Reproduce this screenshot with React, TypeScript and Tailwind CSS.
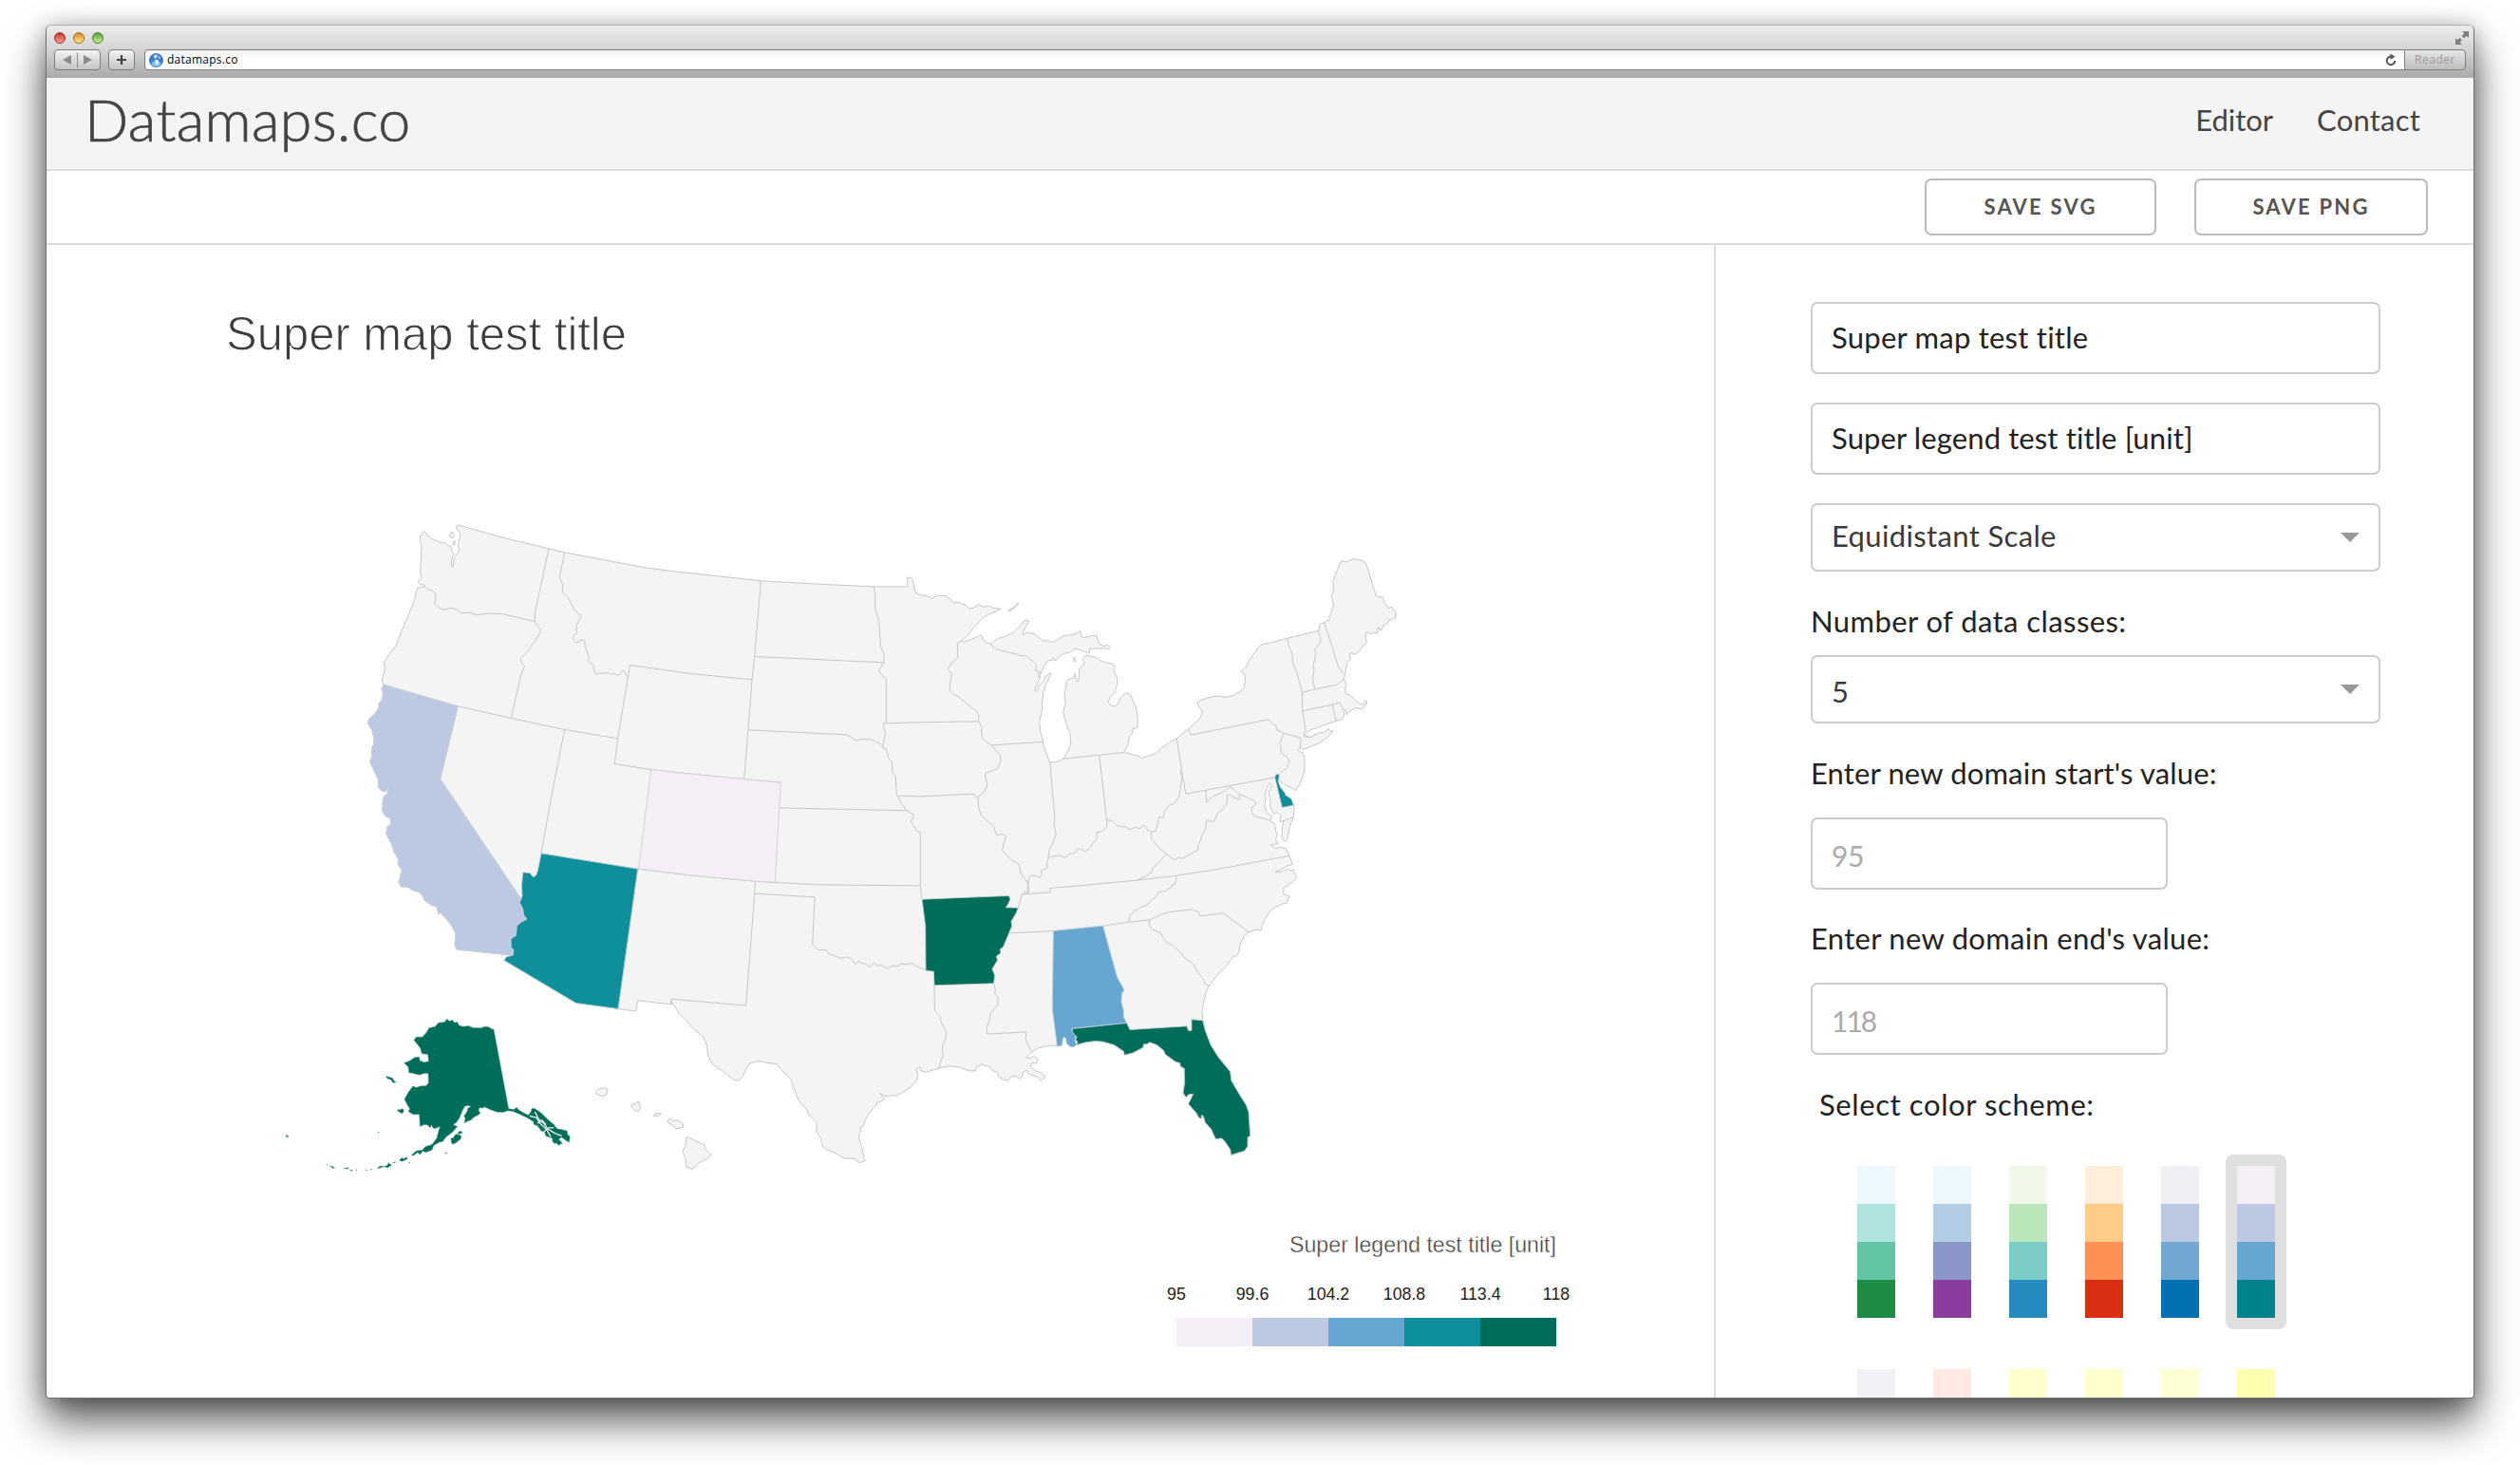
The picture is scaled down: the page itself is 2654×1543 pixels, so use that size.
import React from "react";

/* Map geometry is kept as point lists per survey sheet; each sheet has its own origin. */
const sheet = (dx: number, dy: number) => (points: string) =>
  points
    .trim()
    .split(/\s+/)
    .map((p) => {
      const [x, y] = p.split(",").map(Number);
      return `${x + dx},${y + dy}`;
    })
    .join(" ");

const northwest = sheet(0, 0);
const southwest = sheet(0, 810);
const midwest = sheet(1260, 150);
const gulf = sheet(1260, 1170);
const northeast = sheet(2100, 210);
const southeast = sheet(2100, 1110);
const pacific = sheet(-240, 1560);

const caCoastSouth =
  "540,617 363,599 357,585 360,548 345,520 325,497 312,482 305,488 300,463 285,460 260,442 256,430 245,418 225,412 210,402 187,400 180,385 190,348 177,330 180,315 165,290 158,268 140,232 145,208 149,210 156,198 152,183 138,178 128,160 130,125 134,112 143,110 147,88 138,100 125,97 115,85 115,62 105,40 90,8";
const caCoastNorth =
  "90,810 95,802 95,772 101,760 101,738 95,715 83,695 85,682 108,660 116,645 118,630 127,620 130,600 126,585 132,572";
const coloradoRiver =
  "540,617 543,600 535,592 534,565 550,555 553,525 565,513 585,503 575,490 572,470 562,450";

const floridaCoast =
  "585,520 620,523 628,555 645,600 670,640 707,685 710,712 735,755 757,790 765,812 770,888 762,892 762,920 752,935 735,940 710,948 707,930 690,905 680,895 662,898 655,885 648,868 628,845 622,825 616,822 616,833 608,830 600,815 575,787 582,772 590,755 575,757 568,766 558,752 563,720 562,675 550,668 548,657 535,654 502,630 497,618 475,600 452,592 443,598 433,598 432,608 400,625 373,632 370,620 340,600 305,590 280,588 250,592 222,600";
const mobileBay =
  "222,600 210,607 200,605 190,595 188,580 182,575 177,585 175,602 160,604";

const mainland = [
  northwest(
    "260,87 269,97 280,109 297,116 313,123 326,124 333,131 345,135 348,150 353,155 351,165 347,180 347,198 352,198 355,172 368,153 370,145 367,127 374,105 373,92 361,78 363,70 370,68 390,74 520,110 654,142 704,154 830,178 965,203 1060,215 1190,229 1324,244"
  ),
  midwest(
    "245,104 420,112 527,112 527,84 536,83 545,92 548,115 553,132 570,138 590,142 603,150 622,140 645,141 660,150 675,165 685,160 700,168 708,168 722,181 735,180 755,167 760,176 785,174 800,180 822,182 800,193 770,207 745,232 715,268 697,284 705,288 730,278 760,266 765,270 763,278 780,290 790,293 800,285 815,275 835,270 865,255 890,228 897,218 911,221 900,240 892,256 892,266 905,256 930,262 955,284 967,282 985,288 1000,280 1020,268 1055,262"
  ),
  northeast(
    "232,193 238,212 250,212 270,208 285,206 289,222 295,235 310,240 318,235 326,242 322,250 308,247 285,248 263,248 262,262 248,258 235,252 215,248 205,258 175,266 160,282 153,286 148,276 145,285 131,286 118,306 107,330 104,345 88,380 95,383 103,365 118,350 122,336 140,325 138,333 125,360 116,388 113,420 112,445 104,480 107,510 115,535 117,555 128,585 137,607 150,607 165,604 180,596 193,575 203,550 202,520 190,490 179,450 187,420 183,390 187,375 189,358 193,347 212,340 217,327 220,350 227,352 230,325 229,312 243,300 247,290 240,282 252,268 270,273 285,276 295,285 315,292 335,296 342,308 338,318 350,340 350,360 345,378 342,388 328,400 322,418 330,428 345,430 357,415 362,400 380,388 393,395 400,415 410,435 415,470 414,495 405,502 400,498 397,515 387,530 385,550 372,572 376,576 400,584 415,587 428,594 445,588 472,580 490,562 515,545 538,532 575,502 610,470 620,448 610,435 602,417 630,405 660,398 680,398 690,402 720,395 750,375 755,345 752,328 740,320 755,308 770,280 800,240 812,233 830,231 885,216 986,191 990,172 1004,165 1022,155 1019,147 1025,138 1033,110 1027,80 1033,65 1032,35 1045,0 1058,-30 1072,-26 1098,-36 1125,-30 1135,-22 1143,0 1168,82 1190,86 1192,100 1205,118 1207,123 1215,115 1232,137 1228,152 1222,150 1215,158 1207,157 1203,170 1192,172 1187,182 1182,192 1175,180 1172,200 1160,197 1150,202 1138,195 1134,205 1138,230 1125,240 1118,252 1105,264 1095,266 1092,261 1084,265 1087,280 1075,295 1070,328 1066,345 1074,360 1070,378 1073,392 1085,393 1100,408 1112,420 1130,425 1133,412 1139,415 1138,423 1122,440 1105,435 1090,442 1078,450 1075,457 1071,442 1063,440 1068,458 1060,470 1042,477 1010,487 985,497 960,505 943,522 960,528 985,515 1005,512 1018,500 1020,508 1033,508 1015,528 985,548 955,560 935,567 930,560 920,568 924,573 937,578 942,600 942,630 935,655 925,680 918,688 915,697 905,690 885,680 865,668 860,660 858,670 865,688 880,705 895,722 905,738 909,745 907,780 895,810 887,850 878,858 870,845 872,815 875,792 866,796 864,785 868,778 855,765 845,770 838,760 832,740 834,725 828,700 835,690 838,680 832,672 822,690 817,710 820,720 815,745 822,765 835,775 838,785 832,792 848,802 850,825 857,835 850,850 858,865 835,868 850,880 865,875 870,877 882,878 893,903 905,930 890,933 868,945 850,955 870,952 890,945 900,950 905,946 912,960 916,970 905,985 895,992 875,1005 875,1022 893,1030 886,1052 870,1055 850,1065 832,1078"
  ),
  southeast(
    "818,200 807,225 805,237 790,236 765,244 750,258 737,285 735,305 728,318 715,322 695,350 680,365 665,380 655,395 640,413 630,435 622,470 618,492 620,523"
  ),
  southeast(floridaCoast),
  southeast(mobileBay),
  southeast("155,602 130,603 100,610 82,622"),
  gulf(
    "915,568 902,580 915,583 925,575 940,585 935,598 918,598 917,610 930,622 950,628 963,640 950,654 935,640 910,632 905,620 893,625 890,640 882,648 870,638 855,640 845,653 830,650 815,640 812,628 795,620 785,608 768,605 764,600 745,610 742,622 720,622 690,610 660,607 628,613 585,627 568,620 568,610 553,618 560,632 558,650 535,675 500,697 487,702 478,699 465,703 452,700 440,693 455,712 440,720 432,718 430,728 410,750 395,775 385,800 376,800 380,810 373,832 383,862 390,900 395,906 375,912 360,900 325,898 300,882 265,868 257,855 253,835 240,815 240,785 215,760 208,743 185,718 165,670 160,650 140,630 125,615 115,600 85,597 55,590 45,595 30,597 15,620 8,638"
  ),
  pacific(
    "1500,258 1490,263 1478,260 1445,235 1410,210 1397,185 1393,150 1380,122 1355,103 1330,75 1305,50 1290,25 1280,12"
  ),
  southwest("1042,772 935,760 929,794 873,786 740,768 513,633 520,622"),
  southwest(caCoastSouth),
  northwest(caCoastNorth),
  northwest(
    "127,560 136,520 133,502 150,475 170,450 190,400 205,365 230,305 235,278 240,266 262,262 260,257 248,255 240,247 252,236 248,215 252,130 247,118 248,100 260,87"
  ),
].join(" ");

const borders = [
  northwest("262,262 270,270 285,274 295,283 297,297 293,318 318,335 345,330 362,333 378,346 405,344 428,352 460,347 505,348 609,372"),
  northwest("654,142 609,350 611,375 628,398 628,405 610,435 597,450 595,458 565,490 568,503 578,512 566,540 535,678"),
  northwest("132,572 367,640 535,678 704,714 872,742"),
  northwest("704,154 688,232 698,255 698,280 712,293 730,325 732,332 748,350 757,352 742,385 740,398 744,408 732,418 730,428 740,440 763,429 768,435 768,450 782,487 778,498 795,510 798,530 804,540 815,535 830,537 842,533 850,540 860,536 870,542 878,540 890,526 904,548"),
  northwest("904,548 911,510 1100,537 1296,556"),
  northwest("904,548 872,742 862,822 975,840 1120,856 1271,871 1387,881"),
  northwest("1324,244 1304,483 1296,556 1284,714 1271,871"),
  northwest("367,640 311,870") + " " + southwest("565,437 562,450"),
  northwest("704,714 667,900") + " " + southwest("630,295"),
  southwest("630,295 935,344 1100,364 1306,383 1380,388"),
  southwest("935,344 873,786"),
  southwest("1306,383 1304,424 1277,776 1040,755 1042,772"),
  gulf("44,62 234,73 227,223 245,240 272,240 278,252 300,260 320,267 335,262 350,268 362,285 372,276 385,282 400,288 408,295 422,281 432,290 445,288 463,299 480,290 495,291 510,284 525,286 540,281 558,293 584,303"),
  midwest("45,333 453,352"),
  midwest("24,565 335,580 370,600 380,594 412,595 430,603 445,612 450,622"),
  midwest("420,112 425,135 425,180 437,220 442,300 453,325 453,352 444,365 437,378 447,393 460,402 460,544"),
  midwest("452,544 560,541 752,538"),
  midwest("452,544 453,560 458,575 452,600 450,622 460,625 468,655 478,665 480,700 490,712 493,770 510,800 525,820 548,832 538,855 557,885 568,888 568,1057 572,1100"),
  midwest("122,811 260,814 525,820"),
  midwest("109,1047 245,1054 568,1057"),
  midwest("498,773 570,775 735,767 752,782"),
  midwest("697,284 685,290 686,338 665,353 660,365 655,372 667,388 661,420 661,440 675,453 690,460 715,483 745,505 752,520 752,538 763,558 760,565 763,590 780,605 792,613 820,645 822,660 812,688 773,702 773,715 780,735 770,760 755,770 750,785 752,810 760,835 800,870 808,898 825,893 838,900 827,945 855,975 880,990 885,1018 905,1045 909,1060 910,1080 898,1075 897,1083 888,1085 885,1100 877,1128"),
  midwest("792,613 870,608 955,603"),
  midwest("790,293 805,310 850,320 885,330 905,332 925,350 935,360 932,378 945,380 940,393 947,402"),
  midwest("977,665 993,850 990,865 997,895 985,925 975,945 972,968"),
  northeast("68,985 75,965 90,965 105,972 112,960 108,950 130,940 127,925 133,910 150,903 170,902 185,908 200,896 215,895 220,885 235,880 245,888 258,885 275,860 285,848 285,827 300,827 317,812 317,790 335,792 350,808 378,812 390,820 408,813 420,817 435,805 445,820 458,827 472,825 478,800 482,780 495,782 500,760 515,742 530,738 545,715 550,690 555,650 550,640 552,630"),
  northeast("293,584 317,790"),
  northeast("180,596 293,584 372,576"),
  northeast("538,532 566,707 848,655"),
  northeast("575,502 582,521 828,472 840,485 852,492 855,505 877,515 929,530 929,560"),
  northeast("877,515 862,548 867,555 867,575 885,590 895,605 885,625 862,645 855,645"),
  northeast("888,216 892,240 902,260 905,295 918,325 926,355 934,387 935,445 945,505 940,518 940,526 960,528"),
  northeast("986,191 988,205 993,215 990,232 975,250 977,265 970,300 972,315 968,340 970,360 975,376"),
  northeast("934,387 975,376 1045,362 1057,350 1066,345"),
  northeast("1004,165 1025,230 1048,305 1066,328"),
  northeast("935,445 1030,425 1052,418 1060,432 1063,440"),
  northeast("1030,425 1042,477"),
  northeast("629,697 633,735 655,712 670,708 690,698 707,685 720,695 735,708 755,715 785,730 788,740 775,750 775,768 785,778 815,785 832,792"),
  northeast("737,710 735,725 698,708 697,735 683,755 668,768 655,795 633,790 628,820 618,835 615,850 605,870 605,885 580,897 555,912 545,907 532,915 515,905 500,893 480,875 458,850 458,827"),
  northeast("505,897 480,925 462,942 460,952 440,968 412,980"),
  southeast("47,124 140,118 137,105 230,97 412,80 530,66 662,46 800,20 893,3"),
  southeast("70,82 68,120"),
  northeast("875,793 907,780"),
  southeast("10,247 148,240 305,224 387,212 453,205 490,188 515,180 590,172 597,178 605,178 612,193 685,184 765,244"),
  southeast("387,212 390,192 400,180 425,165 445,158 455,145 475,130 480,118 500,115 520,102 522,95 530,95 536,80 536,66"),
  southeast("453,205 450,220 460,235 485,245 505,275 527,288 555,312 560,322 590,345 605,372 625,395 627,408 640,413"),
  gulf("612,352 613,433 630,450 632,465 650,500 648,520 637,545 640,575 632,590 628,613"),
  gulf("800,346 805,365 803,378 813,390 812,415 790,440 785,465 777,485 780,506 903,499 900,520 915,555 922,562"),
];

const valued: { id: string; fill: string; points: string }[] = [
  { id: "CA", fill: "#bdc8e2", points: [northwest("132,572 367,640 311,870"), southwest("565,437 562,450 572,470 575,490 585,503 565,513 553,525 550,555 534,565 535,592 543,600"), southwest(caCoastSouth), northwest(caCoastNorth)].join(" ") },
  { id: "AZ", fill: "#0e8f9a", points: [southwest("562,450 570,430 568,400 572,355 595,357 600,365 607,370 615,362 620,345 630,295 935,344 873,786 740,768 513,633 520,622"), southwest(coloradoRiver)].join(" ") },
  { id: "CO", fill: "#f5eef6", points: [northwest("977,840 1120,856 1387,881 1369,1196"), southwest("1306,383 1100,364 937,344")].join(" ") },
  { id: "AR", fill: "#006d59", points: gulf("573,80 848,69 852,80 845,95 838,106 877,107 870,125 855,150 857,165 848,187 830,230 820,238 822,250 808,260 812,272 795,300 803,320 800,346 612,352 610,308 585,305 584,165") },
  { id: "AL", fill: "#65a7d1", points: southeast("148,240 305,224 350,387 368,418 372,430 365,435 363,465 370,490 370,512 380,531 207,549 209,560 220,570 216,585 " + mobileBay + " 145,487") },
  { id: "FL", fill: "#006d59", points: southeast("207,549 380,531 390,552 570,541 575,555 585,555 585,540 " + floridaCoast + " 225,590 218,585 222,575 209,560") },
  { id: "DE", fill: "#0e8f9a", points: northeast("848,655 852,645 860,645 862,652 858,665 865,685 880,705 882,712 900,722 907,743 871,750") },
];

const alaska = [
  "572,68 580,75 590,72 596,80 605,78 610,88 622,92 640,90 655,96 680,97 692,92 705,94 712,99 720,101 767,352 785,354 792,347 798,355 815,365 830,372 838,360 840,352 848,350 870,365 890,385 910,402 920,415 937,418 952,422 953,432 961,440 958,458 948,452 935,442 925,448 938,462 932,462 926,468 918,460 912,462 906,455 905,445 885,438 880,425 870,422 858,405 847,402 845,392 825,380 800,368 780,360 765,358 750,363 730,362 710,355 690,346 684,350 675,348 672,358 678,365 670,372 655,380 648,388 640,390 627,397 630,382 626,375 636,360 638,350 648,345 638,341 628,345 620,360 612,380 602,395 592,402 605,408 590,425 582,432 570,440 558,456 550,457 530,468 525,482 505,490 495,485 487,497 480,490 465,500 460,498 475,485 495,482 503,472 525,465 540,445 545,425 550,408 541,412 530,415 523,403 520,412 510,403 500,402 487,408 485,370 465,370 450,360 455,352 447,340 438,322 450,300 465,280 475,285 490,280 505,280 510,275 514,270 513,240 500,240 485,245 465,240 452,238 450,220 437,207 455,200 470,190 484,188 487,200 500,205 514,202 512,180 493,178 488,160 468,135 475,125 495,125 508,110 515,97 535,92 545,80 565,78",
  "380,248 390,252 400,255 405,264 412,268 402,270 395,260 383,256",
  "415,355 425,355 432,351 436,360 430,367 418,360",
  "585,445 592,444 600,432 612,434 618,440 615,448 600,460 590,464 586,458",
  "605,428 615,422 622,427 612,432",
  "422,515 428,507 435,510 445,505 447,511 430,518",
  "352,541 358,535 365,532 370,536",
  "370,534 383,532 388,523 397,530 385,538",
  "400,523 410,519 408,523",
  "63,434 68,437 72,441 66,442",
  "192,527 195,529 193,531",
  "202,532 210,534 218,539 212,540",
  "246,541 262,538 258,542",
  "266,545 275,547 268,548",
  "284,544 288,545 285,547",
  "316,544 320,545 317,547",
  "330,543 335,543 332,545",
  "355,425 358,426 355,428",
  "567,490 572,491 569,494",
  "452,520 456,522 454,524",
].map(pacific);

const straits = [
  "834,375 855,380 868,400 885,415 900,440",
  "850,362 862,385 880,400 890,415 915,430 935,438",
  "858,398 872,388 885,402",
  "875,428 892,412 910,412",
].map(pacific);

const hawaii = [
  "1042,300 1050,290 1068,286 1080,290 1077,305 1065,313 1045,306",
  "1153,342 1165,337 1177,328 1180,338 1185,345 1180,357 1168,360 1158,350",
  "1224,374 1232,366 1250,367 1240,375",
  "1270,388 1278,382 1285,390 1300,388 1318,398 1318,410 1295,416 1285,402 1272,398",
  "1328,443 1333,441 1360,455 1385,465 1390,482 1408,498 1390,512 1365,525 1348,543 1328,535 1326,510 1317,485 1328,465",
].map(pacific);

const islets = [
  midwest("845,188 860,178 878,163 872,174 850,190"),
  northwest("349,88 355,100 349,108 340,104 341,97"),
  northwest("354,117 359,122 356,132 349,126"),
  northeast("213,274 220,282 218,288 212,288"),
];

const legend = [
  { fill: "#f5eef6", from: "95" },
  { fill: "#bdc8e2", from: "99.6" },
  { fill: "#65a7d1", from: "104.2" },
  { fill: "#0e8f9a", from: "108.8" },
  { fill: "#006d59", from: "113.4" },
];

function MapChart() {
  return (
    <svg width="1756" height="1214" viewBox="0 0 1756 1214" className="block shrink-0" fontFamily='"Liberation Sans", Arial, sans-serif'>
      <text x="189" y="110.500" fontSize="50" fill="#3c3c3c" stroke="#fff" strokeWidth="1" textLength="422" lengthAdjust="spacingAndGlyphs">
        Super map test title
      </text>
      <g transform="translate(311 272.5) scale(0.33333)" fill="#f4f4f4" stroke="#c6c6c6" strokeWidth="3" strokeLinejoin="round">
        <polygon points={mainland} />
        {borders.map((b, i) => (
          <polyline key={i} points={b} fill="none" />
        ))}
        {valued.map((s) => (
          <polygon key={s.id} points={s.points} fill={s.fill} stroke={s.id === "CO" ? "#cfc8d2" : "#c9d3d8"} strokeWidth="2.4" />
        ))}
        {alaska.map((a, i) => (
          <polygon key={i} points={a} fill="#006d59" stroke="#5f9d90" strokeWidth="1.5" />
        ))}
        {straits.map((a, i) => (
          <polyline key={i} points={a} fill="none" stroke="#e3efec" strokeWidth="4" />
        ))}
        {hawaii.map((h, i) => (
          <polygon key={i} points={h} />
        ))}
        {islets.map((h, i) => (
          <polygon key={i} points={h} />
        ))}
      </g>
      <text x="1309" y="1060.500" fontSize="24.500" fill="#3c3c3c" stroke="#fff" strokeWidth="0.4" textLength="281" lengthAdjust="spacingAndGlyphs">
        Super legend test title [unit]
      </text>
      {legend.map((l, i) => (
        <g key={l.from}>
          <rect x={1190 + i * 80} y="1130" width="80" height="30" fill={l.fill} />
          <text x={1190 + i * 80} y="1110.500" fontSize="17.8" fill="#222" textAnchor="middle">
            {l.from}
          </text>
        </g>
      ))}
      <text x="1590" y="1110.500" fontSize="17.8" fill="#222" textAnchor="middle">
        118
      </text>
    </svg>
  );
}

const light = "h-3 w-3 rounded-full border";

function BrowserChrome() {
  return (
    <div className="flex h-[57px] shrink-0 flex-col border-b-2 border-[#666] bg-linear-to-b from-[#ececec] via-[#d2d2d2] to-[#a9a9a9]">
      <div className="flex h-[25px] items-center justify-between pl-2 pr-1">
        <div className="flex gap-2">
          <span className={light + " border-[#8f2f2c] bg-linear-to-b from-[#c8302c] to-[#ff9d92]"} />
          <span className={light + " border-[#9a6a1e] bg-linear-to-b from-[#d98a1c] to-[#ffe98a]"} />
          <span className={light + " border-[#4c7a33] bg-linear-to-b from-[#5fa03c] to-[#c9f29a]"} />
        </div>
        <svg width="16" height="16" viewBox="0 0 16 16" fill="#7d7d7d">
          <path d="M8 1h7v7l-2.300-2.300-2.600 2.600-2.400-2.400 2.600-2.600zM1 15V8l2.200 2.200L5.600 7.800 8 10.200 5.600 12.600 8 15z" />
        </svg>
      </div>
      <div className="flex h-[22px] items-stretch px-2">
        <div className="flex w-[49px] items-center rounded-[4px] border border-[#7c7c7c] bg-linear-to-b from-[#f4f4f4] to-[#c4c4c4]">
          <svg width="47" height="20" viewBox="0 0 47 20" fill="#8a8a8a">
            <path d="M8 10l9-5v10zM39 10l-9-5v10z" />
            <path d="M23 2h1v16h-1z" />
          </svg>
        </div>
        <div className="ml-2 flex w-7 items-center justify-center rounded-[4px] border border-[#7c7c7c] bg-linear-to-b from-[#f4f4f4] to-[#c4c4c4]">
          <svg width="12" height="12" viewBox="0 0 12 12" stroke="#444" strokeWidth="2.200">
            <path d="M6 1v10M1 6h10" />
          </svg>
        </div>
        <div className="ml-[10px] flex flex-1 items-center rounded-l-[4px] border border-[#7c7c7c] bg-linear-to-b from-[#f1f1f1] to-white to-40% pl-1 pr-2">
          <svg width="15" height="15" viewBox="0 0 15 15">
            <circle cx="7.500" cy="7.500" r="7" fill="#3b83cf" stroke="#2a62a8" strokeWidth=".8" />
            <ellipse cx="7.500" cy="11" rx="5" ry="3" fill="#7cc4f4" />
            <path d="M5 2.500l3-1 1 1.500-1.500 2-2 .5zM6.500 6.500l3.500 1-.5 4-2 1.500-1-3zM10.500 3l1.500 1.500-1 1.500-1-1z" fill="#e4f2fd" />
          </svg>
          <span className="ml-1 flex-1 font-['Open_Sans',sans-serif] text-xs leading-4 tracking-[0.25px] text-black">datamaps.co</span>
          <svg width="12" height="14" viewBox="0 0 12 14" fill="none" stroke="#555" strokeWidth="2">
            <path d="M7 3.700A4.300 4.300 0 1 0 10.300 8" />
            <path d="M5.500 .5L10.500 3.700 5.500 6.800z" fill="#555" stroke="none" />
          </svg>
        </div>
        <div className="-ml-px flex w-[65px] items-center justify-center rounded-r-[4px] border border-[#7c7c7c] bg-linear-to-b from-[#e6e6e6] to-[#bdbdbd] font-['Open_Sans',sans-serif] text-xs leading-4 tracking-[0.5px] text-[#9b9b9b]">
          Reader
        </div>
      </div>
    </div>
  );
}

function Caret() {
  return (
    <svg width="20" height="10" viewBox="0 0 20 10" fill="#999">
      <path d="M0 0h20L10 10z" />
    </svg>
  );
}

const field = "flex w-[600px] items-center rounded-[7px] border-2 border-[#cccccc] pl-5";
const shortField = "flex h-[76px] w-[376px] items-center rounded-[7px] border-2 border-[#cccccc] pl-5 pt-[3px] text-[30px] text-[#aaa]";

const schemes = [
  ["#ecf8fb", "#b0e3e0", "#63c3a5", "#1e8b42"],
  ["#ecf8fb", "#b3cde4", "#8b95c7", "#893c9c"],
  ["#f0f9e8", "#b9e6ba", "#7bccc4", "#268bbf"],
  ["#feeeda", "#fdcc86", "#fe8f55", "#d82f12"],
  ["#f1eef6", "#bdc8e2", "#73a7d2", "#0070b3"],
  ["#f5eef6", "#bdc8e2", "#65a7d1", "#02828b"],
];
const moreSchemes = ["#f2eff6", "#fdeae2", "#ffffcc", "#ffffcc", "#ffffd4", "#ffffb0"];

function Swatch({ colors, selected }: { colors: string[]; selected?: boolean }) {
  return (
    <div className={selected ? "w-16 rounded-[8px] bg-[#dfdfdf] px-3 py-3" : "w-16 px-3 py-3"}>
      {colors.map((c, i) => (
        <div key={i} className="h-10 w-10" style={{ backgroundColor: c }} />
      ))}
    </div>
  );
}

function Sidebar() {
  return (
    <aside className="flex h-[1214px] flex-1 flex-col overflow-hidden border-l-2 border-[#dcdcdc] pl-[100px] pt-[60px] text-[31px] leading-9 text-[#222] *:shrink-0">
      <div className={field + " h-[76px] pb-[3px] tracking-[0.24px]"}>Super map test title</div>
      <div className={field + " mt-[30px] h-[76px] pb-[3px] tracking-[0.12px]"}>Super legend test title [unit]</div>
      <div className={field + " mt-[30px] h-[72px] justify-between pr-[20px] pb-px tracking-[0.35px] text-[#3a3a3a]"}>
        <span className="-mt-[3px]">Equidistant Scale</span>
        <Caret />
      </div>
      <div className="mt-[34px] h-[54px] tracking-[0.42px]">Number of data classes:</div>
      <div className={field + " h-[72px] justify-between pr-[20px] text-[#3a3a3a]"}>
        <span className="mt-[3px]">5</span>
        <Caret />
      </div>
      <div className="mt-[34px] h-[65px] tracking-[0.15px]">Enter new domain start's value:</div>
      <div className={shortField + " tracking-[-0.4px]"}>95</div>
      <div className="mt-[33px] h-[65px] tracking-[0.3px]">Enter new domain end's value:</div>
      <div className={shortField + " tracking-[-2px]"}>118</div>
      <div className="mt-[34px] pl-[9px] tracking-[0.6px]">Select color scheme:</div>
      <div className="ml-[37px] mt-[35px] flex gap-4">
        {schemes.map((s, i) => (
          <Swatch key={i} colors={s} selected={i === 5} />
        ))}
      </div>
      <div className="ml-[37px] mt-[30px] flex gap-4">
        {moreSchemes.map((c, i) => (
          <Swatch key={i} colors={[c]} />
        ))}
      </div>
    </aside>
  );
}

const button =
  "flex h-[60px] items-center justify-center rounded-[7px] border-2 border-[#bbbbbb] text-[22px] leading-7 font-bold tracking-[2.2px] text-[#555]";

export default function App() {
  return (
    <div className="h-[1543px] w-[2654px] overflow-hidden bg-white pl-[48px] pt-[26px] font-['Lato',sans-serif]">
      <div className="flex h-[1447px] w-[2558px] flex-col overflow-hidden rounded-t-[6px] rounded-b-[4px] border border-t-[#b0b0b0] border-[#6f6f6f] bg-white shadow-[0_24px_44px_rgba(0,0,0,0.64),0_2px_22px_rgba(0,0,0,0.26)]">
        <BrowserChrome />
        <header className="-mt-[2px] flex h-[98px] shrink-0 items-center justify-between border-b-2 border-[#dcdcdc] bg-[#f4f4f4] pb-[9px] pl-10 pr-[56px] text-[#444]">
          <span className="text-[61px] leading-none font-light tracking-[0.35px] [-webkit-text-stroke:0.7px_#444]">Datamaps.co</span>
          <nav className="flex gap-[46px] text-[31px] leading-9">
            <span>Editor</span>
            <span className="tracking-[0.2px]">Contact</span>
          </nav>
        </header>
        <div className="flex h-[78px] shrink-0 items-center justify-end gap-10 border-b-2 border-[#dcdcdc] pr-[48px]">
          <button className={button + " w-[244px]"}>SAVE SVG</button>
          <button className={button + " w-[246px]"}>SAVE PNG</button>
        </div>
        <main className="flex h-[1214px]">
          <MapChart />
          <Sidebar />
        </main>
      </div>
    </div>
  );
}
